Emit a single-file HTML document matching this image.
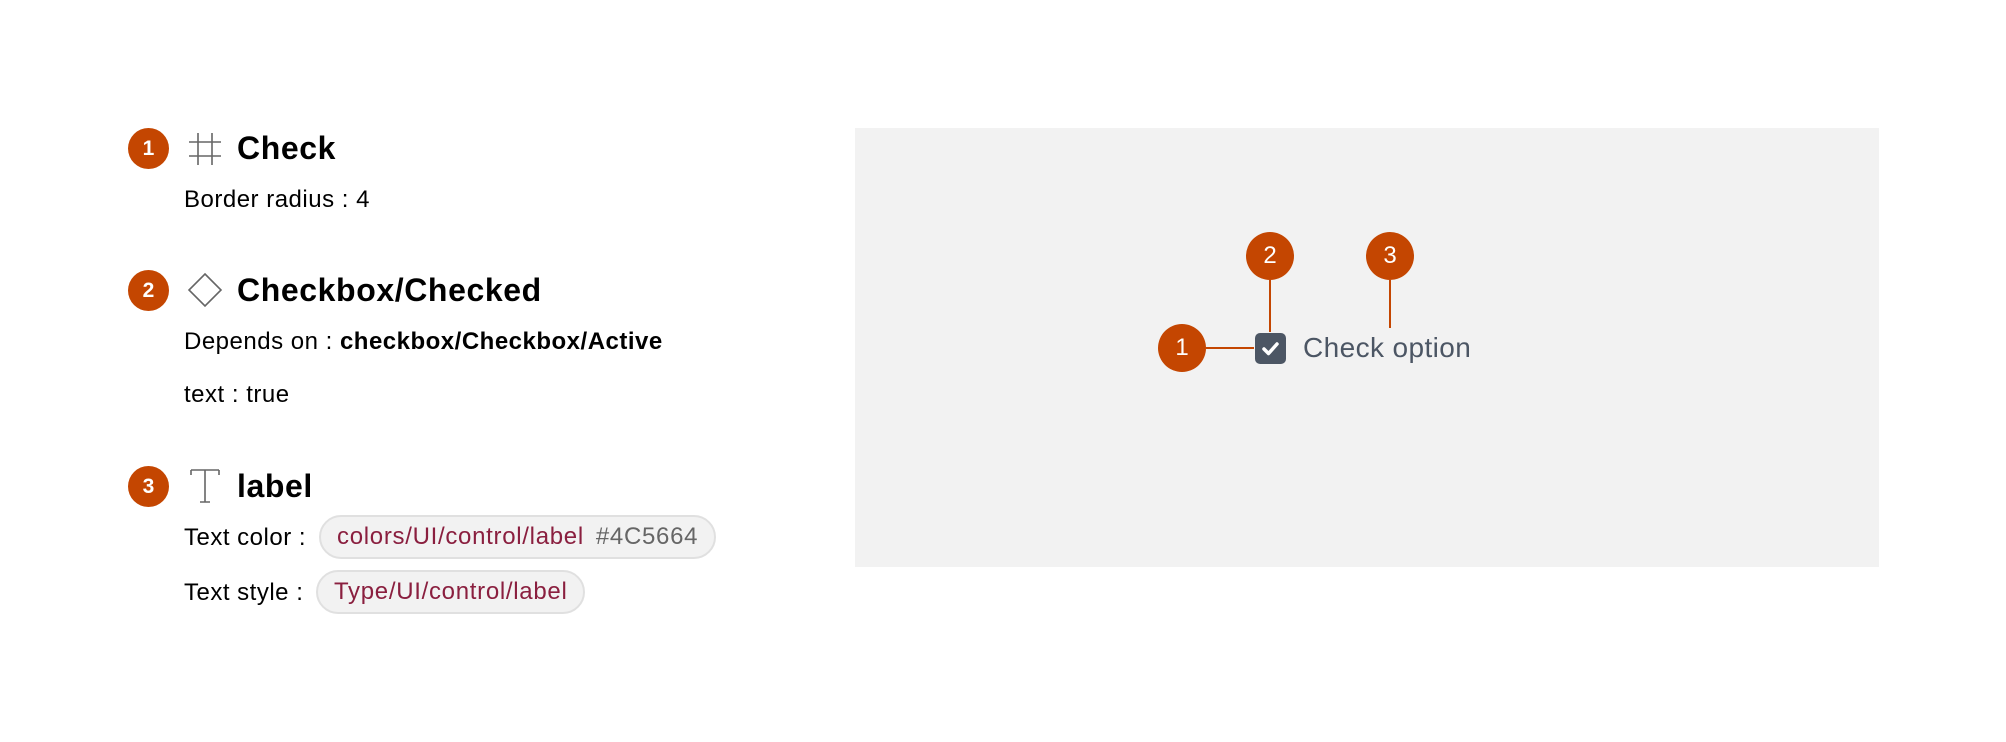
<!DOCTYPE html>
<html><head><meta charset="utf-8"><style>
*{margin:0;padding:0;box-sizing:border-box}
body{width:2006px;height:742px;background:#fff;font-family:"Liberation Sans",sans-serif;position:relative;overflow:hidden;color:#000}
.a{position:absolute}
.b{position:absolute;width:41px;height:41px;border-radius:50%;background:#c44601;color:#fff;font-weight:bold;font-size:21px;display:flex;align-items:center;justify-content:center}
.t{position:absolute;left:237px;font-weight:bold;font-size:32px;letter-spacing:0.6px;line-height:40px;white-space:nowrap}
.p{position:absolute;left:184px;font-size:24px;letter-spacing:0.5px;line-height:30px;white-space:nowrap}
.pill{position:absolute;height:44px;border:2px solid #e0e0e0;background:#f2f2f2;border-radius:22px;font-size:24px;letter-spacing:0.7px;line-height:40px;padding:0 16px;color:#8a1f3f;white-space:nowrap}
.pill span{color:#666;margin-left:12px}
.c{position:absolute;width:48px;height:48px;border-radius:50%;background:#c44601;color:#fff;font-size:24px;display:flex;align-items:center;justify-content:center}
.l{position:absolute;background:#c44601}
</style></head><body>
<div class="b" style="left:128px;top:128px">1</div>
<svg class="a" style="left:188px;top:132px" width="34" height="34" viewBox="0 0 34 34" fill="none" stroke="#666" stroke-width="1.6"><path d="M10 1V33M24 1V33M1 10H33M1 24H33"/></svg>
<div class="t" style="top:128px">Check</div>
<div class="p" style="top:185px">Border radius : 4</div>

<div class="b" style="left:128px;top:270px">2</div>
<svg class="a" style="left:187px;top:272px" width="36" height="36" viewBox="0 0 36 36" fill="none" stroke="#666" stroke-width="1.6"><path d="M18 2L34 18L18 34L2 18Z"/></svg>
<div class="t" style="top:270px">Checkbox/Checked</div>
<div class="p" style="top:327px">Depends on : <b>checkbox/Checkbox/Active</b></div>
<div class="p" style="top:380px">text : true</div>

<div class="b" style="left:128px;top:466px">3</div>
<svg class="a" style="left:190px;top:468px" width="30" height="36" viewBox="0 0 30 36" fill="none" stroke="#666" stroke-width="1.6"><path d="M1 2H29M1 2V7M29 2V7M15 2V34M10 34H20"/></svg>
<div class="t" style="top:466px">label</div>
<div class="p" style="top:523px">Text color :</div>
<div class="pill" style="left:319px;top:515px">colors/UI/control/label<span>#4C5664</span></div>
<div class="p" style="top:578px">Text style :</div>
<div class="pill" style="left:316px;top:570px">Type/UI/control/label</div>

<div class="a" style="left:855px;top:128px;width:1024px;height:439px;background:#f2f2f2"></div>
<div class="l" style="left:1206px;top:347px;width:48px;height:2px"></div>
<div class="l" style="left:1269px;top:280px;width:2px;height:52px"></div>
<div class="l" style="left:1389px;top:280px;width:2px;height:48px"></div>
<div class="c" style="left:1158px;top:324px">1</div>
<div class="c" style="left:1246px;top:232px">2</div>
<div class="c" style="left:1366px;top:232px">3</div>
<div class="a" style="left:1255px;top:333px;width:31px;height:31px;background:#4c5664;border-radius:5px"></div>
<svg class="a" style="left:1255px;top:333px" width="31" height="31" viewBox="0 0 31 31" fill="none" stroke="#fff" stroke-width="3.5" stroke-linecap="round" stroke-linejoin="round"><path d="M9 16L13.5 20.5L22 11"/></svg>
<div class="a" style="left:1303px;top:331px;font-size:28px;letter-spacing:0.4px;line-height:34px;color:#4c5664;white-space:nowrap">Check option</div>
</body></html>
